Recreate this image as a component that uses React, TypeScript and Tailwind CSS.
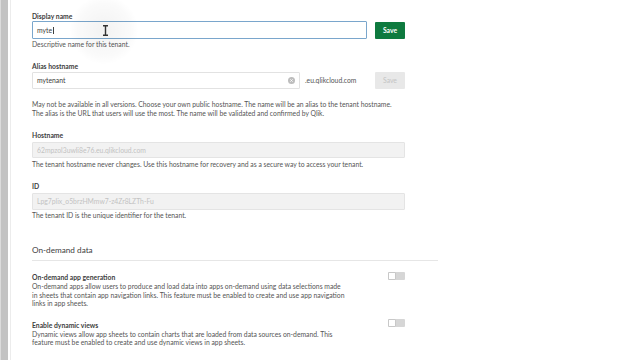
import React from 'react';

const font = { fontFamily: 'Lato, "Open Sans", sans-serif' };

const Toggle: React.FC = () => (
  <div className="flex h-[8px] w-[17px] items-center rounded-[1px] bg-[#d6d6d6]">
    <div className="h-[8px] w-[8px] rounded-[1px] border border-[#c8c8c8] bg-white" />
  </div>
);

const App: React.FC = () => {
  return (
    <div className="relative flex h-screen w-full overflow-hidden bg-white text-[6.8px] leading-[9px] text-[#555]" style={font}>
      {/* left rail */}
      <div className="w-[1px] bg-[#dcdcdc]" />
      <div className="w-[7px] bg-[#c3c3c3]" />
      <div className="w-[3px] border-r border-[#ececec] bg-white" />

      <div className="flex flex-col pl-[21px] pt-[12px]">
        {/* Display name */}
        <div className="font-bold text-[#404040]">Display name</div>
        <div className="flex items-center">
          <div className="relative flex h-[18px] w-[335px] items-center rounded-[1px] border border-[#7aa6cc] px-[4px] text-[#404040]">
            myte<span className="ml-[0.5px] inline-block h-[7px] w-[0.6px] bg-[#404040]" />
          </div>
          <button className="ml-[8px] flex h-[17px] w-[30px] items-center justify-center rounded-[1px] bg-[#0e7a3f] font-bold text-white">
            Save
          </button>
        </div>
        <div className="mt-[1px]">Descriptive name for this tenant.</div>

        {/* Alias hostname */}
        <div className="mt-[13px] font-bold text-[#404040]">Alias hostname</div>
        <div className="mt-[1px] flex items-center">
          <div className="flex h-[17px] w-[268px] items-center justify-between rounded-[1px] border border-[#e2e2e2] px-[4px] text-[#404040]">
            <span>mytenant</span>
            <svg width="7" height="7" viewBox="0 0 10 10">
              <circle cx="5" cy="5" r="5" fill="#bdbdbd" />
              <path d="M3.3 3.3 L6.7 6.7 M6.7 3.3 L3.3 6.7" stroke="#fff" strokeWidth="1.2" />
            </svg>
          </div>
          <span className="ml-[5px] w-[70px]">.eu.qlikcloud.com</span>
          <button className="flex h-[17px] w-[30px] items-center justify-center rounded-[1px] bg-[#e8e8e8] text-[#c4c4c4]">
            Save
          </button>
        </div>
        <div className="mt-[11px]">
          May not be available in all versions. Choose your own public hostname. The name will be an alias to the tenant hostname.
          <br />
          The alias is the URL that users will use the most. The name will be validated and confirmed by Qlik.
        </div>

        {/* Hostname */}
        <div className="mt-[13px] font-bold text-[#404040]">Hostname</div>
        <div className="mt-[2px] flex h-[16px] w-[373px] items-center rounded-[1px] border border-[#e4e4e4] bg-[#f2f2f2] px-[4px] text-[#c2c2c2]">
          62mpzol3uwli8e76.eu.qlikcloud.com
        </div>
        <div className="mt-[2px]">
          The tenant hostname never changes. Use this hostname for recovery and as a secure way to access your tenant.
        </div>

        {/* ID */}
        <div className="mt-[13px] font-bold text-[#404040]">ID</div>
        <div className="mt-[2px] flex h-[17px] w-[373px] items-center rounded-[1px] border border-[#e4e4e4] bg-[#f2f2f2] px-[4px] text-[#c2c2c2]">
          Lpg7plix_o5brzHMmw7-z4Zr8LZTh-Fu
        </div>
        <div className="mt-[1px]">The tenant ID is the unique identifier for the tenant.</div>

        {/* On-demand data */}
        <div className="mt-[25px] text-[8.2px] leading-[10px] text-[#404040]">On-demand data</div>
        <div className="mt-[5px] h-[1px] w-[406px] bg-[#e6e6e6]" />

        <div className="mt-[12px] flex w-[373px] items-start justify-between">
          <div>
            <div className="font-bold text-[#404040]">On-demand app generation</div>
            <div className="leading-[8.6px]">
              On-demand apps allow users to produce and load data into apps on-demand using data selections made
              <br />
              in sheets that contain app navigation links. This feature must be enabled to create and use app navigation
              <br />
              links in app sheets.
            </div>
          </div>
          <div className="mt-[-1px]">
            <Toggle />
          </div>
        </div>

        <div className="mt-[13px] flex w-[373px] items-start justify-between">
          <div>
            <div className="font-bold text-[#404040]">Enable dynamic views</div>
            <div className="leading-[8.6px]">
              Dynamic views allow app sheets to contain charts that are loaded from data sources on-demand. This
              <br />
              feature must be enabled to create and use dynamic views in app sheets.
            </div>
          </div>
          <div className="mt-[-2px]">
            <Toggle />
          </div>
        </div>
      </div>

      {/* cursor halo + I-beam */}
      <div className="pointer-events-none absolute left-[70px] top-[-4px] h-[68px] w-[68px] rounded-full bg-[radial-gradient(circle,rgba(0,0,0,0.05)_0%,rgba(0,0,0,0.02)_55%,rgba(0,0,0,0)_72%)]" />
      <svg className="pointer-events-none absolute left-[102px] top-[25px]" width="7" height="11" viewBox="0 0 7 11">
        <path d="M1 0.8 H6 M1 10.2 H6 M3.5 0.8 V10.2" stroke="#333" strokeWidth="1.4" fill="none" />
      </svg>
    </div>
  );
};

export default App;
